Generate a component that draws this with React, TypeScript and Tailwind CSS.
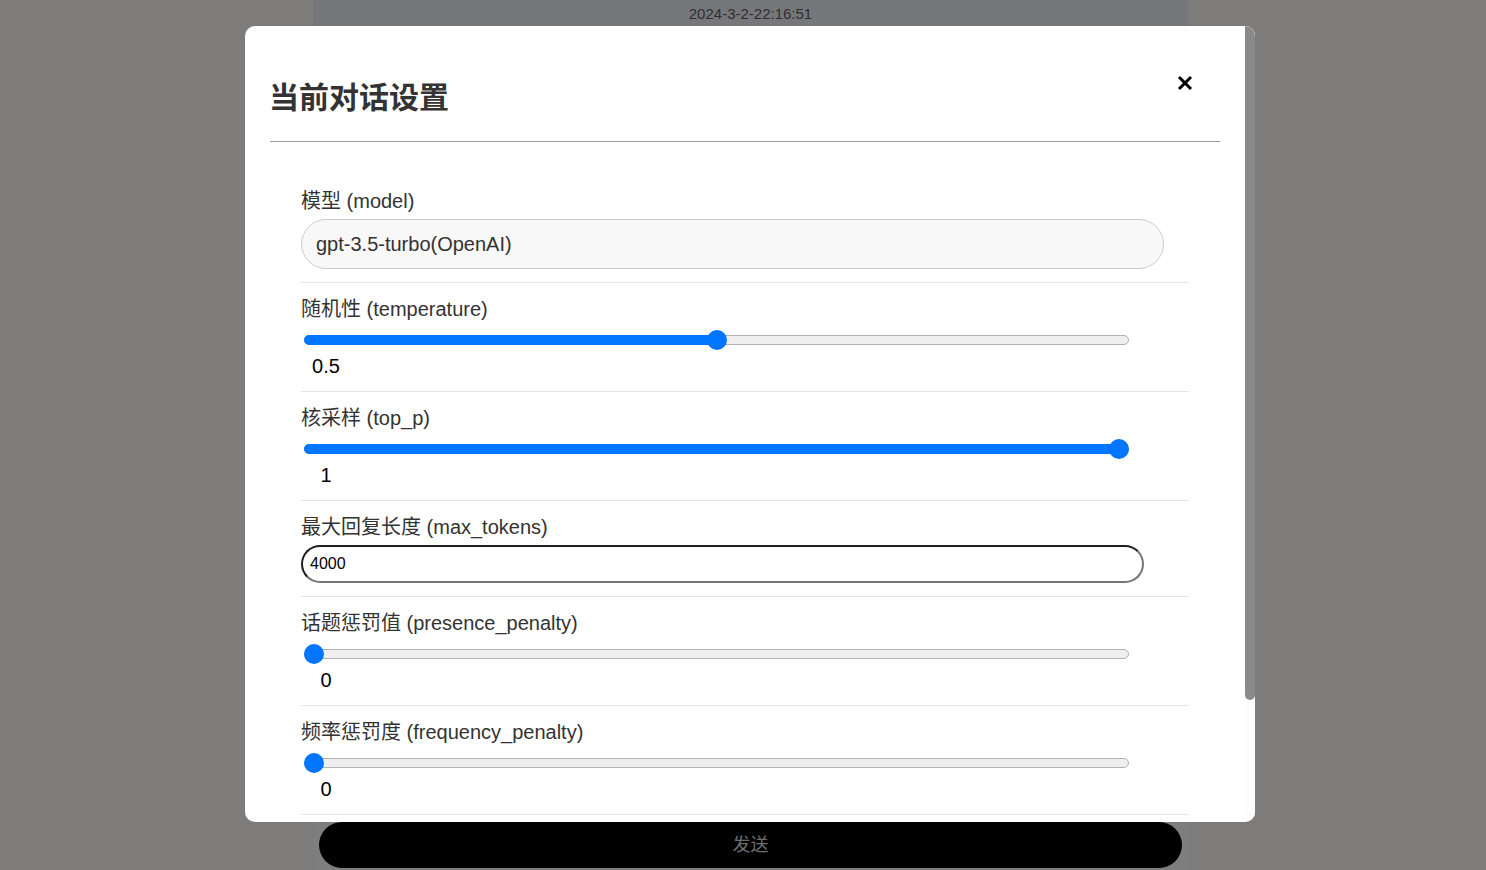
import React from "react";

function Slider({ value }: { value: number }) {
  const left = Math.round(value * 805);
  return (
    <div className="relative ml-[3px] mt-[9px] h-[20px] w-[825px]">
      <div className="absolute left-0 right-0 top-[5px] h-[10px] rounded-full border border-[#b2b2b2] bg-[#efefef]" />
      {value > 0 && (
        <div
          className="absolute left-0 top-[5px] h-[10px] rounded-full bg-[#0075ff]"
          style={{ width: left + 10 }}
        />
      )}
      <div
        className="absolute top-0 h-[20px] w-[20px] rounded-full bg-[#0075ff]"
        style={{ left }}
      />
    </div>
  );
}

function SliderRow({ label, value }: { label: string; value: number }) {
  return (
    <div className="border-b border-[#e6e6e6] pt-[14px] pb-[13px]">
      <div className="h-[24px] text-[20px] leading-[24px] text-[#333]">{label}</div>
      <Slider value={value} />
      <div className="ml-[5px] mt-[4px] h-[24px] w-[40px] text-center text-[20px] leading-[24px] text-black">
        {String(value)}
      </div>
    </div>
  );
}

export default function App() {
  return (
    <div className="relative h-[870px] w-full overflow-hidden bg-[#7d7c7a] font-['Liberation_Sans','Noto_Sans_CJK_SC',sans-serif]">
      {/* background page column */}
      <div className="ml-[313px] flex h-full w-[875px] flex-col bg-[#76777b]">
        <div className="h-[27px] pt-[1px] text-center text-[15px] leading-[26px] text-[#2e2e2e]">
          2024-3-2-22:16:51
        </div>
        <div className="flex-1" />
        <div className="bg-[#7e7e7e] px-[6px] pb-[2px] pt-[8px]">
          <div className="flex h-[46px] items-center justify-center rounded-full bg-black text-[18px] text-[#6e6e6e]">
            发送
          </div>
        </div>
      </div>

      {/* modal */}
      <div className="absolute left-[245px] top-[26px] flex h-[796px] w-[1010px] overflow-hidden rounded-[10px] bg-white">
        <div className="flex-1 overflow-hidden">
          <div className="mx-[25px] flex items-start justify-between border-b border-[#9a9a9a] pb-[23px] pt-[52px]">
            <div className="-ml-[1px] h-[40px] text-[30px] font-bold leading-[40px] text-[#333]">
              当前对话设置
            </div>
            <svg
              className="-mt-[3px] mr-[27px]"
              width="16"
              height="16"
              viewBox="0 0 16 16"
            >
              <path d="M2 2 L14 14 M14 2 L2 14" stroke="#000" strokeWidth="3" strokeLinecap="butt" />
            </svg>
          </div>

          <div className="mx-[56px] pt-[33px]">
            <div className="border-b border-[#e6e6e6] pt-[14px] pb-[13px]">
              <div className="h-[24px] text-[20px] leading-[24px] text-[#333]">模型 (model)</div>
              <div className="mt-[6px] flex h-[50px] w-[863px] items-center rounded-full border border-[#cccccc] bg-[#f8f8f8] pl-[14px] text-[20px] text-[#333]">
                gpt-3.5-turbo(OpenAI)
              </div>
            </div>

            <SliderRow label="随机性 (temperature)" value={0.5} />
            <SliderRow label="核采样 (top_p)" value={1} />

            <div className="border-b border-[#e6e6e6] pt-[14px] pb-[13px]">
              <div className="h-[24px] text-[20px] leading-[24px] text-[#333]">最大回复长度 (max_tokens)</div>
              <div className="mt-[6px] flex h-[38px] w-[843px] items-center rounded-full border-2 border-b-[#767676] border-l-[#1f1f1f] border-r-[#767676] border-t-[#1f1f1f] bg-white pl-[7px] text-[16px] text-black">
                4000
              </div>
            </div>

            <SliderRow label="话题惩罚值 (presence_penalty)" value={0} />
            <SliderRow label="频率惩罚度 (frequency_penalty)" value={0} />
          </div>
        </div>
        {/* scrollbar */}
        <div className="flex w-[10px] flex-col bg-[#fdfdfd]">
          <div className="h-[674px] rounded-b-[5px] bg-[#8a8a8a]" />
        </div>
      </div>
    </div>
  );
}
